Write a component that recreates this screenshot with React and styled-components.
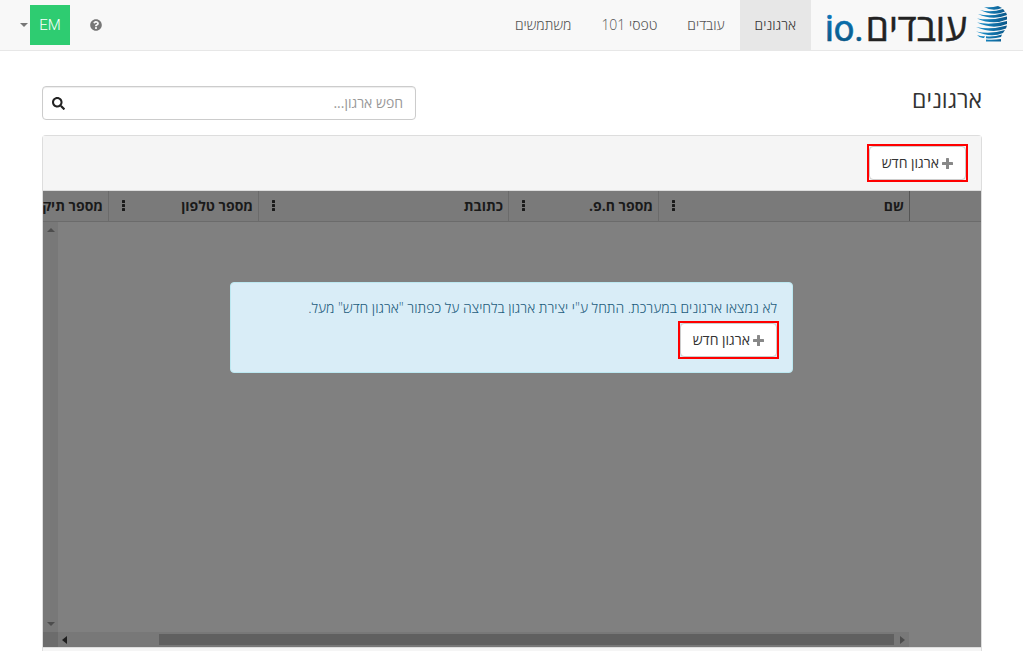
import React from 'react'
import styled, { createGlobalStyle } from 'styled-components'
import { FaQuestionCircle, FaSearch } from 'react-icons/fa'

// STYLE
const GlobalStyle = createGlobalStyle`
  * {
    box-sizing: border-box;
  }

  body {
    margin: 0;
    font-family: 'Open Sans', sans-serif;
    font-size: 14px;
    font-weight: 300;
    line-height: 20px;
    color: #222;
    background-color: #fff;
  }

  button,
  input {
    font: inherit;
  }
`
const Page = styled.div`
  display: flex;
  flex-direction: column;
  height: 100vh;
  min-height: 500px;
`
const Navbar = styled.header`
  display: flex;
  height: 51px;
  background-color: #f8f8f8;
  border-bottom: 1px solid #e7e7e7;
`
const Brand = styled.a`
  display: flex;
  padding: 0 12px;

  svg {
    overflow: visible;
  }
`
const Menu = styled.nav`
  display: flex;
  flex: 1;
`
const MenuLink = styled.a`
  padding: 15px;
  text-decoration: none;
  color: ${({ $active }) => ($active ? '#333' : '#555')};
  background-color: ${({ $active }) => ($active ? '#e7e7e7' : 'transparent')};
`
const Tools = styled.div`
  display: flex;
  align-items: center;
  gap: 20px;
  padding-left: 20px;
`
const ToolButton = styled.button`
  display: flex;
  align-items: center;
  gap: 2px;
  padding: 0;
  border: 0;
  background: none;
  color: #777;
`
const Avatar = styled.span`
  width: 40px;
  background-color: #2ecc71;
  color: #fff;
  font-family: Roboto, sans-serif;
  font-size: 15px;
  line-height: 40px;
  text-align: center;
`
const Main = styled.main`
  display: flex;
  flex: 1;
  flex-direction: column;
  gap: 15px;
  padding: 35px 41px 0 42px;
`
const TitleRow = styled.div`
  display: flex;
  justify-content: space-between;
`
const Title = styled.h1`
  margin: 0;
  font-size: 23px;
  font-weight: 400;
  line-height: 26px;
  color: #333;
`
const SearchBox = styled.label`
  display: flex;
  align-items: center;
  width: 40%;
  max-width: 374px;
  height: 34px;
  padding: 0 12px 0 9px;
  border: 1px solid #ccc;
  border-radius: 4px;
  box-shadow: inset 0 1px 1px rgba(0, 0, 0, 0.075);

  input {
    flex: 1;
    min-width: 0;
    padding: 0;
    border: 0;
    outline: 0;
    background: none;
    font-weight: 400;
  }

  input::placeholder {
    color: #999;
  }
`
const Panel = styled.section`
  display: flex;
  flex: 1;
  flex-direction: column;
  border: 1px solid #ddd;
  border-bottom: 0;
  border-radius: 4px 4px 0 0;
`
const Toolbar = styled.div`
  padding: 10px 15px;
  height: 55px;
  background-color: #f5f5f5;
  border-bottom: 1px solid #ddd;
`
const Highlight = styled.span`
  display: inline-flex;
  outline: 2px solid #f00;
`
const Button = styled.button`
  display: flex;
  align-items: center;
  gap: 3px;
  height: 34px;
  padding: 0 12px;
  border: 1px solid #ccc;
  border-radius: 4px;
  background-color: #fff;
  font-weight: 400;
  color: #333;

  svg {
    fill: #888;
  }
`
const Grid = styled.div`
  display: flex;
  flex: 1;
  flex-direction: column;
  background-color: #808080;
`
const HeadWrap = styled.div`
  padding-right: 71px;
  overflow: hidden;
  background-color: #7a7a7a;
  border-bottom: 1px solid #6b6b6b;
`
const Table = styled.table`
  width: 951px;
  table-layout: fixed;
  border-collapse: separate;
  border-spacing: 0;
`
const HeadCell = styled.th`
  width: ${({ $width }) => $width}px;
  height: 30px;
  padding: 0 5px 0 12px;
  border-right: 1px solid ${({ $first }) => ($first ? '#555' : '#6b6b6b')};
  font-weight: 700;
  color: #1a1a1a;

  div {
    display: flex;
    align-items: center;
    justify-content: space-between;
  }
`
const Body = styled.div`
  display: flex;
  flex: 1;
`
const Content = styled.div`
  flex: 1;
  padding: 60px 188px 0 172px;
`
const Alert = styled.div`
  display: flex;
  flex-direction: column;
  align-items: flex-start;
  gap: 5px;
  padding: 15px;
  border: 1px solid #bce8f1;
  border-radius: 4px;
  background-color: #d9edf7;
  color: #1d5c7c;

  p {
    margin: 0;
  }
`
const VerticalTrack = styled.div`
  display: flex;
  flex-direction: column;
  align-items: center;
  justify-content: space-between;
  width: 15px;
  padding: 4px 0;
  background-color: #787878;
`
const BottomBar = styled.div`
  display: flex;
  height: 15px;
  padding-right: 72px;
`
const HorizontalTrack = styled.div`
  display: flex;
  flex: 1;
  align-items: center;
  gap: 3px;
  padding: 0 4px;
  background-color: #787878;
`
const Thumb = styled.div`
  flex: 1;
  height: 11px;
  margin-left: 86px;
  background-color: #606060;
`
const Corner = styled.div`
  width: 15px;
  background-color: #6c6c6c;
`
const Footer = styled.div`
  height: 4px;
  background-color: #f5f5f5;
  border-top: 1px solid #ddd;
`

const MENU = [
  { label: 'ארגונים', active: true },
  { label: 'עובדים' },
  { label: 'טפסי 101' },
  { label: 'משתמשים' },
]

const COLUMNS = [
  { label: 'שם', width: 251 },
  { label: 'מספר ח.פ.', width: 150 },
  { label: 'כתובת', width: 250 },
  { label: 'מספר טלפון', width: 150 },
  { label: 'מספר תיק', width: 150 },
]

const ARROWS = {
  up: 'M0 6L4 2L8 6Z',
  down: 'M0 2H8L4 6Z',
  left: 'M5 0V8L0 4Z',
  right: 'M3 0L8 4L3 8Z',
}

const Arrow = ({ dir, color = '#4d4d4d' }) => (
  <svg width="8" height="8" viewBox="0 0 8 8" fill={color}>
    <path d={ARROWS[dir]} />
  </svg>
)

const Dots = () => (
  <svg width="5" height="13" viewBox="0 0 5 13" fill="#1a1a1a">
    <rect x="1" y="0" width="3" height="3" rx="0.5" />
    <rect x="1" y="4" width="3" height="3" rx="0.5" />
    <rect x="1" y="8" width="3" height="3" rx="0.5" />
  </svg>
)

const Logo = () => (
  <svg width="188" height="50" viewBox="0 0 188 50" role="img" aria-label="עובדים.io">
    <defs>
      <linearGradient id="blue" x1="0" y1="0" x2="0" y2="1">
        <stop offset="0" stopColor="#0b7cc4" />
        <stop offset="1" stopColor="#075078" />
      </linearGradient>
      <linearGradient id="head" gradientUnits="userSpaceOnUse" x1="154" y1="0" x2="184" y2="0">
        <stop offset="0" stopColor="#1b93cf" />
        <stop offset="1" stopColor="#0a5688" />
      </linearGradient>
    </defs>
    <text
      x="2"
      y="41"
      direction="ltr"
      fontSize="36"
      fontWeight="400"
      fontFamily="Roboto, sans-serif"
      fill="url(#blue)"
      stroke="url(#blue)"
      strokeWidth="0.6"
    >
      io.
    </text>
    <text
      x="144"
      y="41"
      direction="rtl"
      fontSize="37"
      fontWeight="400"
      fontFamily="Open Sans, sans-serif"
      fill="#222"
      stroke="#222"
      strokeWidth="0.5"
    >
      עובדים
    </text>
    <g fill="url(#head)">
      <path d="M161 7Q168 8 175 6L179 8Q170 12 161 7Z" />
      <path d="M157 10Q168 13 180 9L182 11.5Q170 16.5 157 10Z" />
      <path d="M155 14Q168 17 183 12.5L184 15Q170 21 155 14Z" />
      <path d="M154 18.4Q168 21 184 16.5V19.5Q170 25.5 154 18.4Z" />
      <path d="M154 22.6Q168 25.5 184 21V24Q170 30 154 22.6Z" />
      <path d="M153 27Q168 30 184 25.5L183 28.5Q170 34 153 27Z" />
      <path d="M153 31.5Q168 34.5 182 30L180 33Q168 38 153 31.5Z" />
      <path d="M154 35Q160 37 162 36L161 38Q157 38.5 154 35Z" />
      <path d="M163 36.2Q171 37 179 34.5L178 37Q171 39 163 38.2Z" />
      <path d="M163 39.6Q171 40.2 178 39V41.6H163Z" />
    </g>
  </svg>
)

const Plus = () => (
  <svg width="11" height="11" viewBox="0 0 11 11">
    <rect x="4" y="0" width="3" height="11" rx="0.6" />
    <rect x="0" y="4" width="11" height="3" rx="0.6" />
  </svg>
)

const Caret = () => (
  <svg width="8" height="4" viewBox="0 0 8 4" fill="currentColor">
    <path d="M0 0H8L4 4Z" />
  </svg>
)

const NewButton = () => (
  <Highlight>
    <Button type="button">
      <Plus />
      ארגון חדש
    </Button>
  </Highlight>
)

const App = () => {
  return (
    <Page dir="rtl">
      <GlobalStyle />
      <Navbar>
        <Brand href="#">
          <Logo />
        </Brand>
        <Menu>
          {MENU.map((item) => (
            <MenuLink key={item.label} href="#" $active={item.active}>
              {item.label}
            </MenuLink>
          ))}
        </Menu>
        <Tools>
          <ToolButton type="button" aria-label="עזרה">
            <FaQuestionCircle size={12} />
          </ToolButton>
          <ToolButton type="button">
            <Avatar>EM</Avatar>
            <Caret />
          </ToolButton>
        </Tools>
      </Navbar>
      <Main>
        <TitleRow>
          <Title>ארגונים</Title>
          <SearchBox>
            <input type="text" placeholder="חפש ארגון..." aria-label="חפש ארגון" />
            <FaSearch size={13} />
          </SearchBox>
        </TitleRow>
        <Panel>
          <Toolbar>
            <NewButton />
          </Toolbar>
          <Grid>
            <HeadWrap>
              <Table>
                <thead>
                  <tr>
                    {COLUMNS.map((col, i) => (
                      <HeadCell key={col.label} $width={col.width} $first={i === 0}>
                        <div>
                          {col.label}
                          <Dots />
                        </div>
                      </HeadCell>
                    ))}
                  </tr>
                </thead>
              </Table>
            </HeadWrap>
            <Body>
              <Content>
                <Alert>
                  <p>לא נמצאו ארגונים במערכת. התחל ע"י יצירת ארגון בלחיצה על כפתור "ארגון חדש" מעל.</p>
                  <NewButton />
                </Alert>
              </Content>
              <VerticalTrack>
                <Arrow dir="up" />
                <Arrow dir="down" />
              </VerticalTrack>
            </Body>
            <BottomBar>
              <HorizontalTrack>
                <Arrow dir="right" />
                <Thumb />
                <Arrow dir="left" color="#1f1f1f" />
              </HorizontalTrack>
              <Corner />
            </BottomBar>
          </Grid>
          <Footer />
        </Panel>
      </Main>
    </Page>
  )
}

export default App
